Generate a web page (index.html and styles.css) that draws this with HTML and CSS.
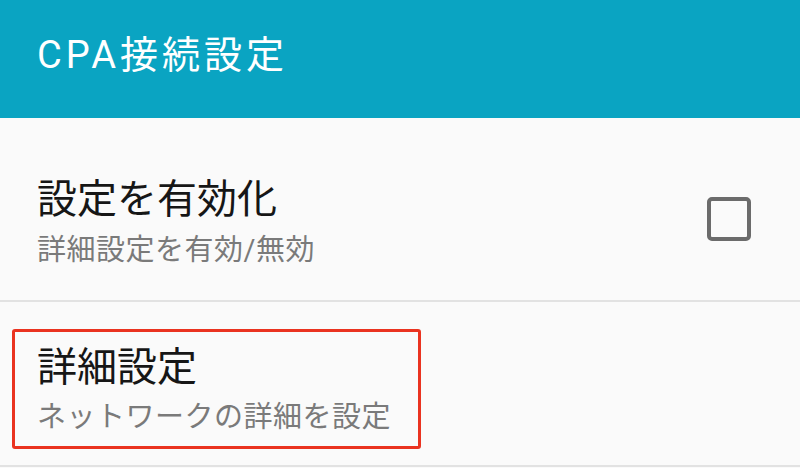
FILE: index.html
```html
<!DOCTYPE html>
<html lang="ja">
<head>
  <meta charset="UTF-8" />
  <meta name="viewport" content="width=device-width, initial-scale=1.0" />
  <title>CPA接続設定</title>
  <link rel="stylesheet" href="styles.css">
</head>
<body>
  <header class="app-bar">
    <h1>CPA接続設定</h1>
  </header>
  <div class="pref-list">
    <div class="pref-row">
      <div class="pref-text">
        <div class="pref-title">設定を有効化</div>
        <div class="pref-summary">詳細設定を有効/無効</div>
      </div>
      <span class="checkbox"></span>
    </div>
    <div class="pref-row pref-row-detail">
      <div class="pref-text highlight">
        <div class="pref-title">詳細設定</div>
        <div class="pref-summary">ネットワークの詳細を設定</div>
      </div>
    </div>
  </div>
</body>
</html>
```

FILE: styles.css
```css
body {
  margin: 0;
  padding: 0;
  background: #fafafa;
  font-family: Roboto, 'Noto Sans CJK JP', sans-serif;
  color: #1a1a1a;
}
.app-bar {
  height: 118px;
  background: #0aa4c2;
  display: flex;
  align-items: center;
  padding: 0 0 6px 37px;
  box-sizing: border-box;
}
.app-bar h1 {
  margin: 0;
  font-size: 38px;
  font-weight: 400;
  letter-spacing: 4px;
  color: #fff;
  line-height: 1.2;
}
.pref-row {
  display: flex;
  justify-content: space-between;
  align-items: flex-start;
  height: 184px;
  padding: 57px 49px 0 37px;
  box-sizing: border-box;
  border-bottom: 2px solid #e2e2e2;
}
.pref-title {
  font-size: 40px;
  line-height: 50px;
  color: #161616;
}
.pref-summary {
  margin-top: 5px;
  font-size: 29px;
  line-height: 40px;
  letter-spacing: 0.5px;
  color: #7a7a7a;
}
.checkbox {
  width: 44px;
  height: 44px;
  margin-top: 22px;
  border: 4px solid #6b6b6b;
  border-radius: 5px;
  box-sizing: border-box;
}
.pref-row-detail {
  height: 165px;
  padding: 27px 0 0 12px;
}
.highlight {
  width: 409px;
  padding: 11px 0 9px 22px;
  border: 3px solid #ea3320;
  border-radius: 3px;
  box-sizing: border-box;
}
.highlight .pref-summary {
  margin-top: 4px;
}
```
